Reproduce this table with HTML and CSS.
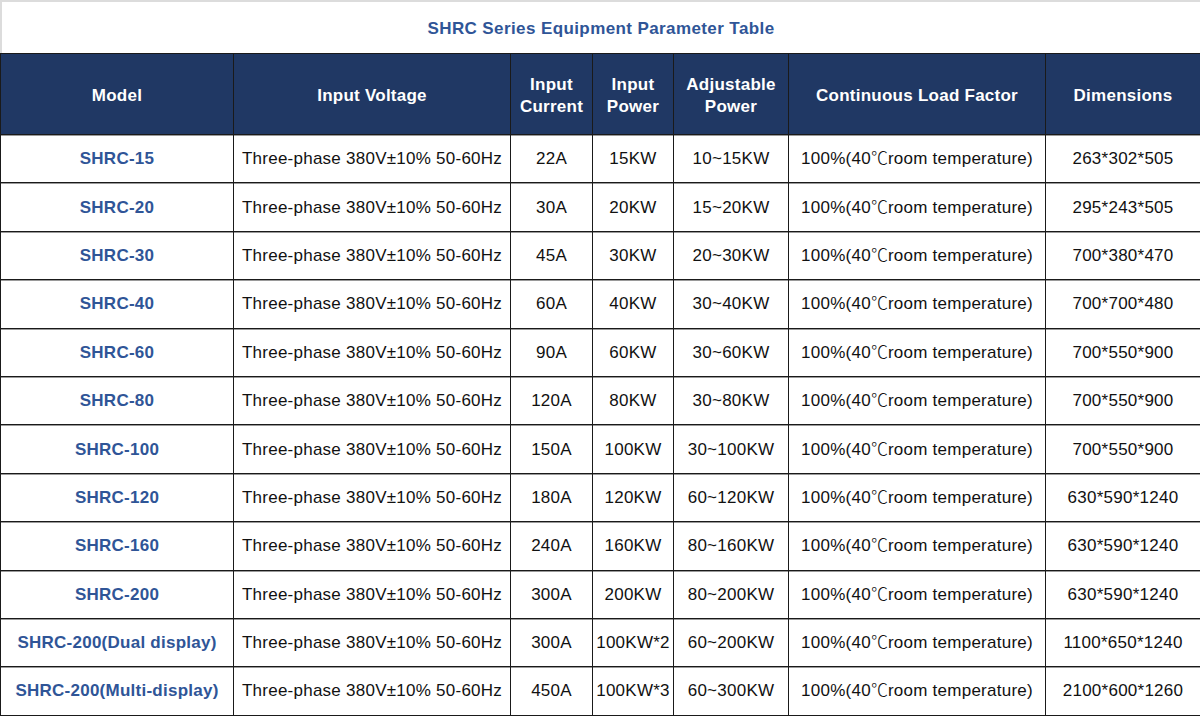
FILE: index.html
```html
<!DOCTYPE html>
<html>
<head>
<meta charset="utf-8">
<link rel="stylesheet" href="styles.css">
</head>
<body>
<div class="sheet">
  <div class="title">SHRC Series Equipment Parameter Table</div>
  <table class="params">
    <colgroup>
      <col class="c-model"><col class="c-volt"><col class="c-cur"><col class="c-pow"><col class="c-adj"><col class="c-load"><col class="c-dim">
    </colgroup>
    <thead>
      <tr>
        <th>Model</th>
        <th>Input Voltage</th>
        <th>Input<br>Current</th>
        <th>Input<br>Power</th>
        <th>Adjustable<br>Power</th>
        <th>Continuous Load Factor</th>
        <th>Dimensions</th>
      </tr>
    </thead>
    <tbody>
      <tr><td class="model">SHRC-15</td><td>Three-phase 380V±10% 50-60Hz</td><td>22A</td><td>15KW</td><td>10~15KW</td><td>100%(40<span class="deg">℃</span>room temperature)</td><td>263*302*505</td></tr>
      <tr><td class="model">SHRC-20</td><td>Three-phase 380V±10% 50-60Hz</td><td>30A</td><td>20KW</td><td>15~20KW</td><td>100%(40<span class="deg">℃</span>room temperature)</td><td>295*243*505</td></tr>
      <tr><td class="model">SHRC-30</td><td>Three-phase 380V±10% 50-60Hz</td><td>45A</td><td>30KW</td><td>20~30KW</td><td>100%(40<span class="deg">℃</span>room temperature)</td><td>700*380*470</td></tr>
      <tr><td class="model">SHRC-40</td><td>Three-phase 380V±10% 50-60Hz</td><td>60A</td><td>40KW</td><td>30~40KW</td><td>100%(40<span class="deg">℃</span>room temperature)</td><td>700*700*480</td></tr>
      <tr><td class="model">SHRC-60</td><td>Three-phase 380V±10% 50-60Hz</td><td>90A</td><td>60KW</td><td>30~60KW</td><td>100%(40<span class="deg">℃</span>room temperature)</td><td>700*550*900</td></tr>
      <tr><td class="model">SHRC-80</td><td>Three-phase 380V±10% 50-60Hz</td><td>120A</td><td>80KW</td><td>30~80KW</td><td>100%(40<span class="deg">℃</span>room temperature)</td><td>700*550*900</td></tr>
      <tr><td class="model">SHRC-100</td><td>Three-phase 380V±10% 50-60Hz</td><td>150A</td><td>100KW</td><td>30~100KW</td><td>100%(40<span class="deg">℃</span>room temperature)</td><td>700*550*900</td></tr>
      <tr><td class="model">SHRC-120</td><td>Three-phase 380V±10% 50-60Hz</td><td>180A</td><td>120KW</td><td>60~120KW</td><td>100%(40<span class="deg">℃</span>room temperature)</td><td>630*590*1240</td></tr>
      <tr><td class="model">SHRC-160</td><td>Three-phase 380V±10% 50-60Hz</td><td>240A</td><td>160KW</td><td>80~160KW</td><td>100%(40<span class="deg">℃</span>room temperature)</td><td>630*590*1240</td></tr>
      <tr><td class="model">SHRC-200</td><td>Three-phase 380V±10% 50-60Hz</td><td>300A</td><td>200KW</td><td>80~200KW</td><td>100%(40<span class="deg">℃</span>room temperature)</td><td>630*590*1240</td></tr>
      <tr><td class="model">SHRC-200(Dual display)</td><td>Three-phase 380V±10% 50-60Hz</td><td>300A</td><td>100KW*2</td><td>60~200KW</td><td>100%(40<span class="deg">℃</span>room temperature)</td><td>1100*650*1240</td></tr>
      <tr><td class="model">SHRC-200(Multi-display)</td><td>Three-phase 380V±10% 50-60Hz</td><td>450A</td><td>100KW*3</td><td>60~300KW</td><td>100%(40<span class="deg">℃</span>room temperature)</td><td>2100*600*1260</td></tr>
    </tbody>
  </table>
</div>
</body>
</html>
```

FILE: styles.css
```css
html, body {
  margin: 0;
  padding: 0;
  background: #ffffff;
}

.sheet {
  width: 1200px;
  font-family: "Liberation Sans", Arial, sans-serif;
  font-size: 17px;
  letter-spacing: 0.25px;
  color: #111111;
}

.title {
  height: 53px;
  box-sizing: border-box;
  border-top: 2px solid #dcdcdc;
  border-left: 2px solid #dcdcdc;
  display: flex;
  align-items: center;
  justify-content: center;
  font-weight: bold;
  color: #2f5597;
  letter-spacing: 0.4px;
  padding-top: 2px;
}

.params {
  width: 1200px;
  border-collapse: collapse;
  table-layout: fixed;
}

.c-model { width: 233px; }
.c-volt { width: 277px; }
.c-cur { width: 82px; }
.c-pow { width: 81px; }
.c-adj { width: 115px; }
.c-load { width: 257px; }
.c-dim { width: 155px; }

.params th,
.params td {
  border: 1px solid #1a1a1a;
  text-align: center;
  vertical-align: middle;
  padding: 0 3px;
  white-space: nowrap;
}

.params th {
  background: #203864;
  color: #ffffff;
  font-weight: bold;
  height: 77px;
  line-height: 22px;
  padding-top: 3px;
}

.params td {
  height: 46.4px;
  line-height: 20px;
  padding-top: 1px;
  box-shadow: inset 0 1px 0 #9a9a9a;
}

.params td.model {
  font-weight: bold;
  color: #2f5597;
  padding: 1px 1px 0;
}

.deg {
  font-family: "Noto Sans CJK SC", sans-serif;
  font-weight: 300;
  letter-spacing: 0;
  line-height: 1px;
}
```
